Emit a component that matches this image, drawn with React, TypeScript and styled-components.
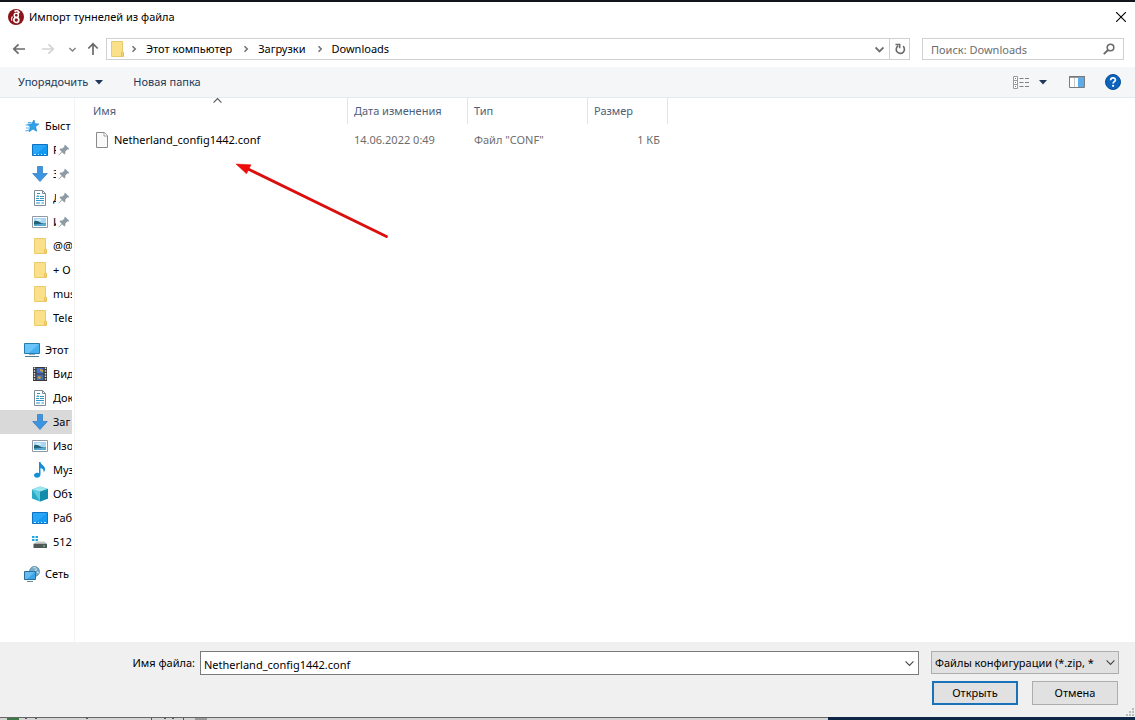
import React from 'react';
import styled, { createGlobalStyle } from 'styled-components';

const GlobalStyle = createGlobalStyle`
  * { box-sizing: border-box; }
  body { margin: 0; background: #fff; }
  body, button, input, select, table {
    font-family: "Noto Sans", "Open Sans", sans-serif;
    font-size: 11px;
    line-height: 16px;
    color: #000;
  }
  svg { display: block; flex: none; }
`;

/* ---------- layout ---------- */

const Dialog = styled.main`
  display: flex;
  flex-direction: column;
  min-height: 100vh;
  border-top: 2px solid #12161c;
  background: #fff;
`;

const TitleBar = styled.header`
  display: flex;
  align-items: center;
  gap: 5px;
  height: 29px;
  padding: 0 8px;
`;

const Title = styled.h1`
  flex: 1;
  margin: 0;
  font-size: 11px;
  font-weight: 400;
`;

const IconButton = styled.button<{ $width?: number }>`
  display: flex;
  align-items: center;
  justify-content: center;
  width: ${(p) => p.$width ?? 24}px;
  height: 20px;
  padding: 0;
  border: 0;
  background: transparent;
  color: #5e5e5e;
`;

const NavBar = styled.nav`
  display: flex;
  align-items: center;
  height: 36px;
  padding: 0 11px 0 7px;
`;

const AddressBar = styled.div`
  display: flex;
  align-items: center;
  flex: 1;
  height: 22px;
  padding-left: 2px;
  border: 1px solid #d0d0d0;
`;

const Crumbs = styled.ol`
  display: flex;
  align-items: center;
  flex: 1;
  margin: 0;
  padding: 0;
  list-style: none;
`;

const Crumb = styled.li`
  display: flex;
  align-items: center;
`;

const CrumbLink = styled.a`
  padding: 0 5px 0 3px;
  color: #000;
  text-decoration: none;
`;

const RefreshButton = styled(IconButton)`
  border-left: 1px solid #d0d0d0;
`;

const SearchBox = styled.form`
  display: flex;
  align-items: center;
  width: 202px;
  height: 22px;
  margin-left: 12px;
  padding: 0 2px 0 8px;
  border: 1px solid #d0d0d0;
`;

const SearchInput = styled.input`
  flex: 1;
  min-width: 0;
  height: 20px;
  padding: 0;
  border: 0;
  outline: 0;
  background: transparent;
  &::placeholder { color: #6d6d6d; opacity: 1; }
`;

const Toolbar = styled.div`
  display: flex;
  align-items: center;
  height: 31px;
  padding: 0 14px 0 18px;
  border-bottom: 1px solid #e6e9ec;
  background: #f4f6f8;
`;

const ToolButton = styled.button`
  display: flex;
  align-items: center;
  gap: 7px;
  margin-right: 30px;
  padding: 0;
  border: 0;
  background: transparent;
  color: #1e395b;
`;

const ToolGroup = styled.div`
  display: flex;
  align-items: center;
  gap: 20px;
  margin-left: auto;
`;

const ViewButton = styled(ToolButton)`
  gap: 9px;
  margin-right: 2px;
`;

const PlainButton = styled(ToolButton)`
  margin-right: 0;
`;

const Content = styled.div`
  display: flex;
  flex: 1;
`;

const Sidebar = styled.aside`
  width: 75px;
  padding: 16px 2px 0 0;
  border-right: 1px solid #f3f3f3;
`;

const TreeGroup = styled.ul`
  margin: 0 0 8px;
  padding: 0;
  list-style: none;
`;

const TreeItem = styled.li<{ $nested?: boolean; $selected?: boolean }>`
  display: flex;
  align-items: center;
  gap: 5px;
  height: 24px;
  padding-left: ${(p) => (p.$nested ? 32 : 24)}px;
  overflow: hidden;
  white-space: nowrap;
  background: ${(p) => (p.$selected ? '#d9d9d9' : 'transparent')};
`;

const TreeLabel = styled.span<{ $pinned?: boolean }>`
  flex: ${(p) => (p.$pinned ? '0 0 3px' : '1')};
  min-width: 0;
  overflow: hidden;
`;

const PinSlot = styled.span`
  flex: none;
  margin-left: -3px;
`;

const FileArea = styled.section`
  position: relative;
  flex: 1;
`;

const FileTable = styled.table`
  table-layout: fixed;
  width: 593px;
  border-collapse: separate;
  border-spacing: 0;
`;

const HeadCell = styled.th<{ $width: number; $first?: boolean }>`
  position: relative;
  width: ${(p) => p.$width}px;
  height: 26px;
  padding: 0 6px 0 ${(p) => (p.$first ? 18 : 6)}px;
  border-right: 1px solid #e3e3e3;
  color: #4c607a;
  font-weight: 400;
  text-align: left;
`;

const SortMark = styled.span`
  position: absolute;
  top: -2px;
  left: 138px;
`;

const Cell = styled.td<{ $align?: 'right' }>`
  height: 32px;
  padding: 0 8px 0 6px;
  color: #6d6d6d;
  text-align: ${(p) => p.$align ?? 'left'};
`;

const NameCell = styled(Cell)`
  padding-left: 20px;
  color: #000;
`;

const FileName = styled.span`
  display: flex;
  align-items: center;
  gap: 5px;
`;

const Pointer = styled.svg`
  position: absolute;
  top: 60px;
  left: 155px;
`;

const Footer = styled.footer`
  position: relative;
  display: flex;
  flex-direction: column;
  gap: 6px;
  padding: 9px 16px 12px 0;
  background: #f0f0f0;
`;

const FieldRow = styled.div`
  display: flex;
  align-items: flex-start;
`;

const FieldLabel = styled.label`
  width: 200px;
  padding: 4px 5px 0 0;
  text-align: right;
`;

const ComboBox = styled.div`
  display: flex;
  align-items: center;
  flex: 1;
  height: 24px;
  border: 1px solid #7a7a7a;
  background: #fff;
`;

const ComboInput = styled.input`
  flex: 1;
  min-width: 0;
  height: 22px;
  padding: 2px 0 0 3px;
  border: 0;
  outline: 0;
  background: transparent;
`;

const SelectBox = styled.div`
  display: grid;
  align-items: center;
  width: 188px;
  margin-left: 12px;
  & > * { grid-area: 1 / 1; }
  & > svg { justify-self: end; margin-right: 4px; pointer-events: none; }
`;

const Select = styled.select`
  appearance: none;
  width: 100%;
  height: 23px;
  padding: 0 18px 0 3px;
  border: 1px solid #adadad;
  border-radius: 0;
  background: #e1e1e1;
`;

const ActionRow = styled.div`
  display: flex;
  justify-content: flex-end;
  gap: 14px;
  padding-right: 1px;
`;

const ActionButton = styled.button<{ $primary?: boolean }>`
  width: 86px;
  height: 24px;
  padding: 0;
  border: ${(p) => (p.$primary ? '2px solid #1a73b8' : '1px solid #adadad')};
  background: #e1e1e1;
`;

const Grip = styled.svg`
  position: absolute;
  right: 1px;
  bottom: 1px;
`;

const Backdrop = styled.div`
  display: flex;
  height: 3px;
`;

const BackdropLight = styled.div`
  flex: 828;
  border-top: 1px solid #666;
  background: #d4d4d4;
  overflow: hidden;
`;

const BackdropDark = styled.div`
  flex: 307;
  background: #0d2745;
`;

/* ---------- icons ---------- */

const AppLogo = () => (
  <svg width="16" height="16" viewBox="0 0 16 16">
    <circle cx="8" cy="8" r="8" fill="#8b1219" />
    <path d="M6.500 2.500C8 1.300 10.500 1.800 11 3.500L9.500 4.500" fill="none" stroke="#fff" strokeWidth="1.700" />
    <circle cx="8.300" cy="6.300" r="2.100" fill="none" stroke="#fff" strokeWidth="1.500" />
    <circle cx="8.300" cy="11" r="2.500" fill="none" stroke="#fff" strokeWidth="1.700" />
    <path d="M4.500 7.500c-1 1.300-1.300 2.800-.8 4.300" fill="none" stroke="#f3dddd" strokeWidth="1.300" />
    <circle cx="8.700" cy="3" r=".6" fill="#8b1219" />
  </svg>
);

const CloseIcon = () => (
  <svg width="10" height="10" viewBox="0 0 10 10">
    <path d="M0 0l10 10M10 0L0 10" stroke="#000" strokeWidth="1.1" />
  </svg>
);

const Arrow = ({ dir, color = '#6a6a6a' }: { dir: 'left' | 'right' | 'up'; color?: string }) => {
  const turn = { left: 0, up: 90, right: 180 }[dir];
  return (
    <svg width="14" height="14" viewBox="0 0 14 14">
      <path d="M13 7H2M6.500 2.300L1.800 7l4.700 4.700" transform={`rotate(${turn} 7 7)`} fill="none" stroke={color} strokeWidth="1.700" />
    </svg>
  );
};

const Chevron = ({ size = 8, weight = 1.2, color = '#444', turn = 0 }: { size?: number; weight?: number; color?: string; turn?: number }) => (
  <svg width={size} height={size} viewBox="0 0 8 8">
    <path d="M.5 2.200L4 5.700l3.500-3.500" transform={`rotate(${turn} 4 4)`} fill="none" stroke={color} strokeWidth={weight} />
  </svg>
);

const CrumbChevron = () => (
  <svg width="6" height="8" viewBox="0 0 6 8">
    <path d="M1.500 1.200L4.300 4 1.500 6.800" fill="none" stroke="#707070" strokeWidth="1.500" />
  </svg>
);

const CaretDown = () => (
  <svg width="8" height="5" viewBox="0 0 8 5">
    <path d="M0 0h8L4 4.500z" fill="#1e395b" />
  </svg>
);

const RefreshIcon = () => (
  <svg width="12" height="12" viewBox="0 0 12 12">
    <path d="M9 3.200A4.100 4.100 0 1 1 4.200 2.800" fill="none" stroke="#6a6a6a" strokeWidth="1.600" />
    <path d="M1.500 1.500h4.200v3.800" fill="none" stroke="#6a6a6a" strokeWidth="1.500" />
  </svg>
);

const SearchIcon = () => (
  <svg width="12" height="12" viewBox="0 0 12 12">
    <circle cx="7.500" cy="4.500" r="3.300" fill="none" stroke="#6a6a6a" strokeWidth="1.600" />
    <path d="M5 7L.8 11.200" stroke="#6a6a6a" strokeWidth="1.900" />
  </svg>
);

const FolderIcon = () => (
  <svg width="16" height="16" viewBox="0 0 16 16">
    <path d="M2.500.5h11v10.500l1 1v3.500h-12z" fill="#fbe08a" stroke="#e9ca70" />
    <path d="M12.500 15v-3.800l1-.9.900 1V15z" fill="#f6d87c" stroke="#dfbc58" strokeWidth=".8" />
  </svg>
);

const FileIcon = () => (
  <svg width="14" height="16" viewBox="0 0 14 16">
    <path d="M1.500.5h7.800l3.200 3.200v11.800h-11z" fill="#f9f9f9" stroke="#8a8a8a" />
    <path d="M9 .5V4h3.500" fill="#fff" stroke="#8a8a8a" strokeWidth=".8" />
  </svg>
);

const ViewIcon = () => (
  <svg width="17" height="13" viewBox="0 0 17 13">
    <path d="M.5.5h4v12h-4zM.5 4.500h4M.5 8.500h4" fill="#fff" stroke="#9a9a9a" />
    <path d="M2 2.500h1M2 6.500h1M2 10.500h1" stroke="#4c7fb8" />
    <path d="M6.500 2.500h4M12 2.500h4M6.500 6.500h4M12 6.500h4M6.500 10.500h4M12 10.500h4" stroke="#808080" />
  </svg>
);

const PaneIcon = () => (
  <svg width="16" height="12" viewBox="0 0 16 12">
    <path d="M.5.5h15v11H.5z" fill="#fff" stroke="#7b7b7b" />
    <path d="M0 1h16" stroke="#777" strokeWidth="1.500" />
    <path d="M5.500 2v9" stroke="#c8c8c8" />
    <path d="M9 1.500h6V11H9z" fill="#5cabea" />
  </svg>
);

const HelpIcon = () => (
  <svg width="16" height="16" viewBox="0 0 16 16">
    <circle cx="8" cy="8" r="7.500" fill="#0b63bd" stroke="#0a4f96" />
    <path d="M5.700 6.200c0-3 4.700-3 4.700-.2 0 1.700-2.300 1.700-2.300 3.500" fill="none" stroke="#fff" strokeWidth="1.700" />
    <circle cx="8.100" cy="11.800" r="1.100" fill="#fff" />
  </svg>
);

const PinIcon = () => (
  <svg width="12" height="12" viewBox="0 0 12 12">
    <path d="M7.200.8l4 4-1 .9-.9-.1-2 2 .1 1.900-1 1-2.300-2.300L.8 11.500l-.4-.4 3.200-3.400L1.500 5.500l1-1 1.900.1 2-2-.2-.9z" fill="#8f9aa4" />
  </svg>
);

const StarIcon = () => (
  <svg width="16" height="16" viewBox="0 0 16 16">
    <path d="M10 2l1 3.800 3.800.2-3.200 2.600 1 4.600-3.600-2.200-4 2.800 1.400-4.800L3.500 6.200l4.200-.3z" fill="#2da2ec" stroke="#1c83cc" strokeWidth=".7" />
    <path d="M4 4.500h3.500M1.500 7h4M2 10h4M1.500 13l4-1" stroke="#4cb3ef" strokeWidth="1.200" />
  </svg>
);

const DesktopIcon = () => (
  <svg width="16" height="16" viewBox="0 0 16 16">
    <path d="M.5 2.500h15v11H.5z" fill="#159af3" stroke="#0b72c4" />
    <path d="M1 3h14L3 13H1z" fill="#3fb1fa" opacity=".5" />
    <path d="M2 12.500h2M6 12.500h1M9 12.500h1M12 12.500h2" stroke="#bfe4ff" />
  </svg>
);

const DownloadIcon = () => (
  <svg width="16" height="16" viewBox="0 0 16 16">
    <path d="M5.500.5h5v7h4.800L8 15.500.7 7.500h4.800z" fill="#3d94e0" stroke="#2b78bd" strokeWidth=".7" />
  </svg>
);

const DocumentIcon = () => (
  <svg width="16" height="16" viewBox="0 0 16 16">
    <path d="M2.500.5h8l3 3v12h-11z" fill="#fff" stroke="#7f8c96" />
    <path d="M10.500.5v3h3" fill="none" stroke="#7f8c96" />
    <path d="M5 3.500h3M8 6.500h4M4 8.500h3M8 8.500h4M4 10.500h8M4 13h4M9.500 13H12" stroke="#3093c9" strokeWidth="1.200" />
    <path d="M4 7l2-2 1.500 2z" fill="#3ba4a8" />
  </svg>
);

const PictureIcon = () => (
  <svg width="16" height="16" viewBox="0 0 16 16">
    <path d="M.5 2.500h15v11H.5z" fill="#fff" stroke="#8f9aa3" />
    <path d="M2 4h12v8H2z" fill="#a6d8f6" />
    <path d="M2 7.500c2-1.500 4-.5 6 .8s4 1.200 6 1.200V11H2z" fill="#24637c" />
    <path d="M2 10.500l12-1V12H2z" fill="#5ba8d0" />
    <path d="M4 6h5" stroke="#fff" />
  </svg>
);

const ComputerIcon = () => (
  <svg width="16" height="16" viewBox="0 0 16 16">
    <path d="M.5 1.500h15v10H.5z" fill="#43b1f1" stroke="#277cae" />
    <path d="M1 2h14L5 11H1z" fill="#85d1fb" opacity=".6" />
    <path d="M5 12.500h6" stroke="#9ab" />
    <path d="M1 14.500h14" stroke="#527d98" />
  </svg>
);

const VideoIcon = () => (
  <svg width="16" height="16" viewBox="0 0 16 16">
    <path d="M1 1h14v14H1z" fill="#383838" />
    <path d="M2.500 1.500v13M13.500 1.500v13" stroke="#e6e6e6" strokeWidth="1.400" strokeDasharray="1.500 1.200" />
    <path d="M4.500 2h7v5.500h-7z" fill="#4774c5" />
    <path d="M4.500 8.500h7V14h-7z" fill="#486dab" />
    <path d="M8 3l3 1v2L8 5zM5 12l2-2 2 1-1 2z" fill="#d0a23c" />
  </svg>
);

const MusicIcon = () => (
  <svg width="16" height="16" viewBox="0 0 16 16">
    <path d="M7 0h1.500c.3 3 4.500 3.500 4.500 7 0 1.500-.5 2.500-1.300 3.500C12 7.500 10.500 6.500 8.500 6v6.500c0 4-6.500 4.200-6.500.8 0-2.300 3-3.100 5-2z" fill="#168fd8" />
  </svg>
);

const CubeIcon = () => (
  <svg width="16" height="16" viewBox="0 0 16 16">
    <path d="M0 3.500L8 .5l8 2.500v9.500l-8 3-8-3z" fill="#27abc6" />
    <path d="M0 3.500l8-3 8 2.500-8 2.800z" fill="#9be6f0" />
    <path d="M8 5.800L16 3v9.500l-8 3z" fill="#128caa" />
    <path d="M0 3.500l8 2.300v9.700L4 9z" fill="#5fcbdc" />
  </svg>
);

const DriveIcon = () => (
  <svg width="16" height="16" viewBox="0 0 16 16">
    <path d="M0 2h2.500v2H0zM3.500 2H6v2H3.500zM0 5h2.500v2H0zM3.500 5H6v2H3.500z" fill="#1ba7e2" />
    <path d="M4 7.500h8.500L15 10H1.500z" fill="#c5c9c9" />
    <path d="M1.500 9.800H15V14H1.500z" fill="#505757" />
    <path d="M11 12h2" stroke="#63e27c" />
  </svg>
);

const NetworkIcon = () => (
  <svg width="16" height="16" viewBox="0 0 16 16">
    <circle cx="10.500" cy="5.500" r="5" fill="#79abc7" stroke="#477a99" strokeWidth=".7" />
    <path d="M9 2c2-1 4 0 3 2s-3 1-3 3M13 6l2 1" stroke="#d3edf7" fill="none" />
    <path d="M.5 5.500h11v8H.5z" fill="#3ba5e7" stroke="#276f9d" />
    <path d="M1 6h10L3 13H1z" fill="#82cbf6" opacity=".6" />
    <path d="M3 15.500h6" stroke="#6488a0" />
  </svg>
);

/* ---------- data ---------- */

type Node = { label: string; icon: React.FC; pinned?: boolean; selected?: boolean };

const groups: { root: Node; items: Node[] }[] = [
  {
    root: { label: 'Быст', icon: StarIcon },
    items: [
      { label: 'Р', icon: DesktopIcon, pinned: true },
      { label: 'З', icon: DownloadIcon, pinned: true },
      { label: 'Д', icon: DocumentIcon, pinned: true },
      { label: 'И', icon: PictureIcon, pinned: true },
      { label: '@@', icon: FolderIcon },
      { label: '+ О', icon: FolderIcon },
      { label: 'mus', icon: FolderIcon },
      { label: 'Tele', icon: FolderIcon },
    ],
  },
  {
    root: { label: 'Этот', icon: ComputerIcon },
    items: [
      { label: 'Вид', icon: VideoIcon },
      { label: 'Док', icon: DocumentIcon },
      { label: 'Заг', icon: DownloadIcon, selected: true },
      { label: 'Изо', icon: PictureIcon },
      { label: 'Муз', icon: MusicIcon },
      { label: 'Объ', icon: CubeIcon },
      { label: 'Раб', icon: DesktopIcon },
      { label: '512', icon: DriveIcon },
    ],
  },
  { root: { label: 'Сеть', icon: NetworkIcon }, items: [] },
];

const TreeRow = ({ node, nested }: { node: Node; nested?: boolean }) => (
  <TreeItem $nested={nested} $selected={node.selected}>
    <node.icon />
    <TreeLabel $pinned={node.pinned}>{node.label}</TreeLabel>
    {node.pinned && <PinSlot><PinIcon /></PinSlot>}
  </TreeItem>
);

export default function App() {
  return (
    <>
      <GlobalStyle />
      <Dialog>
        <TitleBar>
          <AppLogo />
          <Title>Импорт туннелей из файла</Title>
          <IconButton $width={12} aria-label="Закрыть"><CloseIcon /></IconButton>
        </TitleBar>

        <NavBar>
          <IconButton aria-label="Назад"><Arrow dir="left" /></IconButton>
          <IconButton $width={34} aria-label="Вперед"><Arrow dir="right" color="#d2d2d2" /></IconButton>
          <IconButton $width={14} aria-label="Последние расположения"><Chevron size={7} weight={1.6} color="#808080" /></IconButton>
          <IconButton $width={27} aria-label="Вверх"><Arrow dir="up" /></IconButton>
          <AddressBar>
            <FolderIcon />
            <Crumbs>
              {['Этот компьютер', 'Загрузки', 'Downloads'].map((name) => (
                <Crumb key={name}>
                  <IconButton $width={18} aria-label="Показать папки"><CrumbChevron /></IconButton>
                  <CrumbLink href="#">{name}</CrumbLink>
                </Crumb>
              ))}
            </Crumbs>
            <IconButton $width={20} aria-label="Предыдущие адреса"><Chevron size={9} weight={1.6} color="#707070" /></IconButton>
            <RefreshButton $width={20} aria-label="Обновить"><RefreshIcon /></RefreshButton>
          </AddressBar>
          <SearchBox>
            <SearchInput aria-label="Поиск" placeholder="Поиск: Downloads" />
            <IconButton type="button" aria-label="Найти"><SearchIcon /></IconButton>
          </SearchBox>
        </NavBar>

        <Toolbar>
          <ToolButton>Упорядочить <CaretDown /></ToolButton>
          <ToolButton>Новая папка</ToolButton>
          <ToolGroup>
            <ViewButton aria-label="Вид"><ViewIcon /><CaretDown /></ViewButton>
            <PlainButton aria-label="Область просмотра"><PaneIcon /></PlainButton>
            <PlainButton aria-label="Справка"><HelpIcon /></PlainButton>
          </ToolGroup>
        </Toolbar>

        <Content>
          <Sidebar>
            {groups.map((group) => (
              <TreeGroup key={group.root.label}>
                <TreeRow node={group.root} />
                {group.items.map((item) => <TreeRow key={item.label} node={item} nested />)}
              </TreeGroup>
            ))}
          </Sidebar>
          <FileArea>
            <FileTable>
              <thead>
                <tr>
                  <HeadCell $width={273} $first>Имя<SortMark><Chevron size={9} turn={180} weight={1} color="#555" /></SortMark></HeadCell>
                  <HeadCell $width={120}>Дата изменения</HeadCell>
                  <HeadCell $width={120}>Тип</HeadCell>
                  <HeadCell $width={80}>Размер</HeadCell>
                </tr>
              </thead>
              <tbody>
                <tr>
                  <NameCell><FileName><FileIcon />Netherland_config1442.conf</FileName></NameCell>
                  <Cell>14.06.2022 0:49</Cell>
                  <Cell>Файл "CONF"</Cell>
                  <Cell $align="right">1 КБ</Cell>
                </tr>
              </tbody>
            </FileTable>
            <Pointer width="165" height="85" viewBox="0 0 165 85">
              <path d="M16 10L156.500 78.500" stroke="#dc0d0d" strokeWidth="2.800" strokeLinecap="round" />
              <path d="M6 6l15 .8-4.500 9z" fill="#f00b0b" stroke="#e00b0b" strokeWidth=".5" />
            </Pointer>
          </FileArea>
        </Content>

        <Footer>
          <FieldRow>
            <FieldLabel htmlFor="file-name">Имя файла:</FieldLabel>
            <ComboBox>
              <ComboInput id="file-name" defaultValue="Netherland_config1442.conf" />
              <IconButton $width={17} aria-label="Недавние файлы"><Chevron size={9} weight={1} /></IconButton>
            </ComboBox>
            <SelectBox>
              <Select aria-label="Тип файлов">
                <option>Файлы конфигурации (*.zip, *</option>
              </Select>
              <Chevron size={9} weight={1} />
            </SelectBox>
          </FieldRow>
          <ActionRow>
            <ActionButton $primary>Открыть</ActionButton>
            <ActionButton>Отмена</ActionButton>
          </ActionRow>
          <Grip width="8" height="8" viewBox="0 0 8 8">
            <path d="M6 0h2v2H6zM3 3h2v2H3zM6 3h2v2H6zM0 6h2v2H0zM3 6h2v2H3zM6 6h2v2H6z" fill="#bcbcbc" />
          </Grip>
        </Footer>
        <Backdrop>
          <BackdropLight>
            <svg width="220" height="2" viewBox="0 0 220 2">
              <path d="M7 0h12v2H7z" fill="#3d7a45" />
              <path d="M25 0h2v1h-2zM35 0h2v1h-2zM86 0h2v1h-2zM151 0h1v2h-1zM164 0h2v1h-2zM172 0h2v1h-2zM183 0h1v2h-1z" fill="#555" />
              <path d="M195 0h12v2h-12z" fill="#999" />
            </svg>
          </BackdropLight>
          <BackdropDark />
        </Backdrop>
      </Dialog>
    </>
  );
}
